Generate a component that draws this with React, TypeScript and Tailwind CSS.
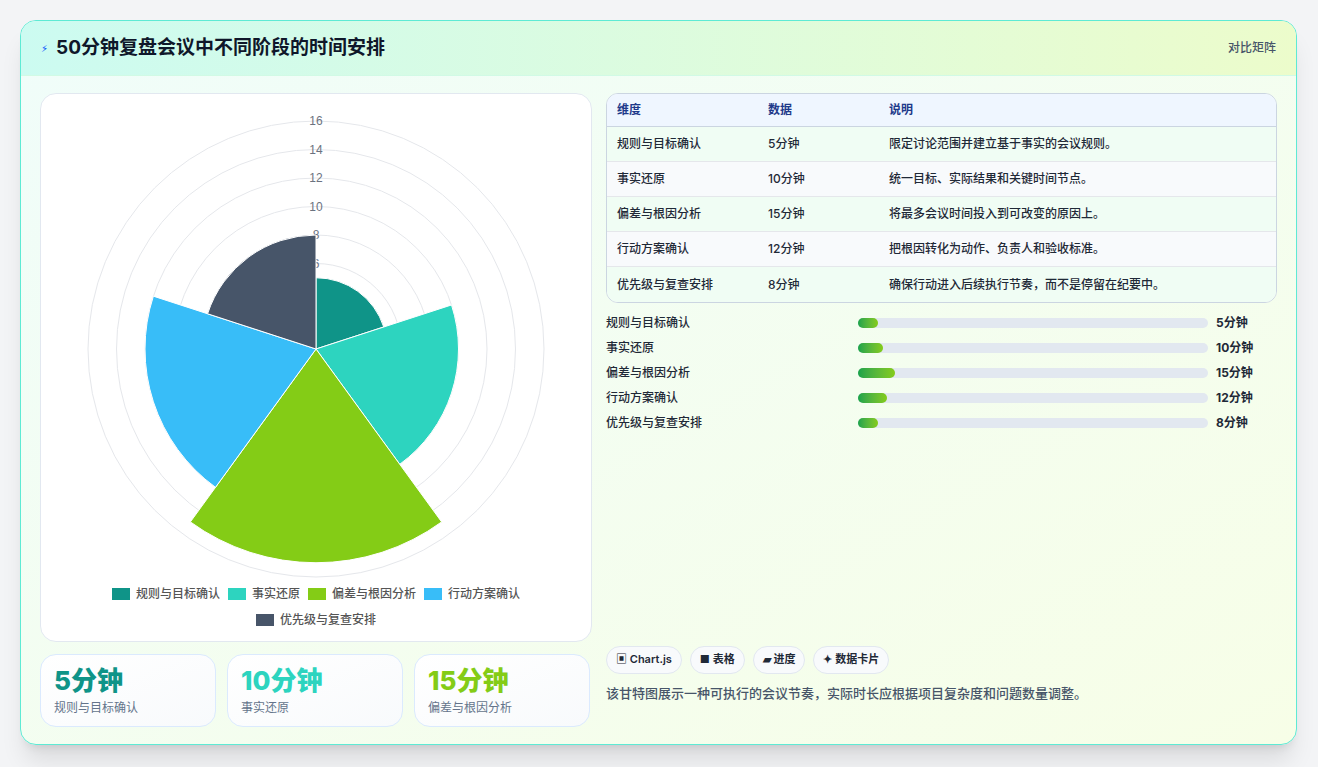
import React from "react";

const segs = [
  { n: "规则与目标确认", v: 5, c: "#0f9488", d: "限定讨论范围并建立基于事实的会议规则。", w: 20 },
  { n: "事实还原", v: 10, c: "#2dd4bf", d: "统一目标、实际结果和关键时间节点。", w: 25 },
  { n: "偏差与根因分析", v: 15, c: "#84cc16", d: "将最多会议时间投入到可改变的原因上。", w: 37 },
  { n: "行动方案确认", v: 12, c: "#38bdf8", d: "把根因转化为动作、负责人和验收标准。", w: 29 },
  { n: "优先级与复查安排", v: 8, c: "#475569", d: "确保行动进入后续执行节奏，而不是停留在纪要中。", w: 20 },
];

function Polar() {
  const cx = 275, cy = 248, u = 14.25;
  const pt = (r: number, a: number) => {
    const rad = ((a - 90) * Math.PI) / 180;
    return [cx + r * Math.cos(rad), cy + r * Math.sin(rad)];
  };
  return (
    <svg width="550" height="480" viewBox="0 0 550 480">
      {[2, 4, 6, 8, 10, 12, 14, 16].map((t) => (
        <circle key={t} cx={cx} cy={cy} r={t * u} fill="none" stroke="#e5e7eb" strokeWidth="1" />
      ))}
      {[6, 8, 10, 12, 14, 16].map((t) => (
        <text key={t} x={cx} y={cy - t * u + 4} textAnchor="middle" fontSize="12" fill="#6b7280" fontFamily="Liberation Sans, sans-serif">
          {t}
        </text>
      ))}
      {segs.map((s, i) => {
        const r = s.v * u;
        const [x1, y1] = pt(r, i * 72);
        const [x2, y2] = pt(r, (i + 1) * 72);
        return <path key={i} d={`M${cx} ${cy} L${x1} ${y1} A${r} ${r} 0 0 1 ${x2} ${y2} Z`} fill={s.c} stroke="#fff" strokeWidth="1" />;
      })}
    </svg>
  );
}

export default function App() {
  return (
    <div className="w-[1318px] h-[767px] bg-[#f3f4f6] pt-5 pl-5" style={{ fontFamily: "Inter, 'Noto Sans CJK SC', sans-serif" }}>
      <div className="w-[1277px] h-[725px] rounded-2xl border border-[#5eead4] overflow-hidden shadow-xl bg-gradient-to-br from-[#f0fdfa] to-[#f7fee7] flex flex-col">
        <div className="h-[55px] shrink-0 flex items-center justify-between px-5 border-b border-[#d1fae5] bg-gradient-to-r from-[#ccfbf1] to-[#ecfccb]">
          <div className="flex items-center gap-2">
            <span className="text-[10px] text-blue-600">⚡︎</span>
            <span className="text-[19px] font-bold text-[#0f172a]">50分钟复盘会议中不同阶段的时间安排</span>
          </div>
          <span className="text-[12px] text-[#475569] font-medium">对比矩阵</span>
        </div>
        <div className="flex gap-[14px] px-[19px] pt-[17px]">
          <div className="w-[552px] flex flex-col gap-[12px]">
            <div className="h-[549px] bg-white rounded-2xl border border-[#e2e8f0] flex flex-col items-center pt-[7px]">
              <Polar />
              <div className="flex flex-wrap justify-center gap-x-2 gap-y-2 w-[440px] text-[12px] text-[#555] font-medium mt-[4px]">
                {segs.map((s) => (
                  <div key={s.n} className="flex items-center gap-[6px]">
                    <span className="w-[18px] h-[12px]" style={{ background: s.c }} />
                    {s.n}
                  </div>
                ))}
              </div>
            </div>
            <div className="flex gap-[11px]">
              {segs.slice(0, 3).map((s) => (
                <div key={s.n} className="w-[176px] h-[73px] rounded-2xl border border-[#dbeafe] bg-gradient-to-br from-white to-[#f8fafc] px-[13px] pt-[10px]">
                  <div className="text-[26px] font-extrabold leading-[32px]" style={{ color: s.c }}>{s.v}分钟</div>
                  <div className="text-[12px] text-[#64748b] mt-[2px]">{s.n}</div>
                </div>
              ))}
            </div>
          </div>
          <div className="flex-1 flex flex-col">
            <div className="rounded-xl border border-[#cbd5e1] overflow-hidden bg-white text-[12px]">
              <div className="flex h-[33px] items-center bg-[#eff6ff] text-[#1e3a8a] font-semibold border-b border-[#cbd5e1]">
                <div className="w-[161px] pl-[10px]">维度</div>
                <div className="w-[121px]">数据</div>
                <div>说明</div>
              </div>
              {segs.map((s, i) => (
                <div key={s.n} className={`flex h-[35px] items-center text-[#1f2937] font-medium ${i < 4 ? "border-b border-[#e5e7eb]" : ""} ${i % 2 === 0 ? "bg-[#f0fdf4]" : "bg-[#f8fafc]"}`}>
                  <div className="w-[161px] pl-[10px]">{s.n}</div>
                  <div className="w-[121px]">{s.v}分钟</div>
                  <div>{s.d}</div>
                </div>
              ))}
            </div>
            <div className="mt-[12px] flex flex-col gap-[10px]">
              {segs.map((s) => (
                <div key={s.n} className="flex items-center h-[15px] text-[12px] font-medium text-[#1f2937]">
                  <div className="w-[252px]">{s.n}</div>
                  <div className="w-[350px] h-[10px] rounded-full bg-[#e2e8f0]">
                    <div className="h-full rounded-full bg-gradient-to-r from-[#16a34a] to-[#84cc16]" style={{ width: s.w }} />
                  </div>
                  <div className="ml-[8px] font-bold">{s.v}分钟</div>
                </div>
              ))}
            </div>
            <div className="mt-auto flex gap-[8px] text-[11px] font-semibold text-[#1f2937]">
              {["▣ Chart.js", "■ 表格", "▰ 进度", "✦ 数据卡片"].map((c) => (
                <span key={c} className="h-[28px] px-[9px] flex items-center rounded-full border border-[#e2e8f0] bg-[#f8fafc]">{c}</span>
              ))}
            </div>
            <div className="text-[13px] text-[#475569] font-medium mt-[10px] mb-[24px]">该甘特图展示一种可执行的会议节奏，实际时长应根据项目复杂度和问题数量调整。</div>
          </div>
        </div>
      </div>
    </div>
  );
}
